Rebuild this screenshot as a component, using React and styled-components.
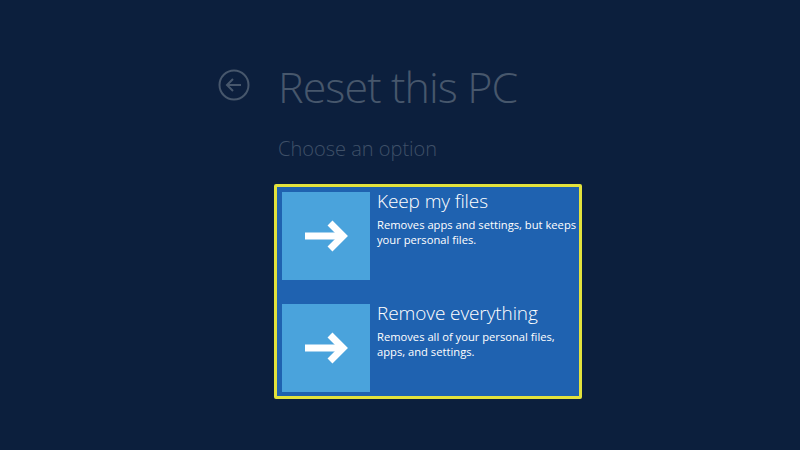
import React from "react";
import styled, { createGlobalStyle } from "styled-components";

const Global = createGlobalStyle`
  html, body { margin: 0; padding: 0; }
  body { background: #0c1f3d; font-family: "Open Sans", "Noto Sans", sans-serif; }
`;

const Page = styled.div`
  width: 800px;
  height: 450px;
  box-sizing: border-box;
  padding: 62px 0 0 218px;
  display: grid;
  grid-template-columns: 60px auto;
  grid-template-rows: auto auto auto;
  align-content: start;
  justify-content: start;
`;

const BackButton = styled.button`
  width: 32px;
  height: 32px;
  padding: 0;
  border: none;
  background: none;
  align-self: center;
  display: flex;
  margin-top: -4px;
`;

const Title = styled.h1`
  margin: 0;
  font-weight: 300;
  font-size: 43px;
  line-height: 50px;
  color: #47576c;
  letter-spacing: -0.9px;
`;

const Subtitle = styled.h2`
  grid-column: 2;
  margin: 24px 0 0 0;
  font-weight: 300;
  font-size: 20px;
  line-height: 26px;
  color: #3f5068;
`;

const OptionsBox = styled.div`
  grid-column: 2;
  margin: 22px 0 0 -4px;
  width: 308px;
  box-sizing: border-box;
  border: 3px solid #e3e23c;
  border-radius: 2px;
  background: #1f62b0;
  padding: 5px 0 4px 5px;
  display: flex;
  flex-direction: column;
  gap: 24px;
`;

const Option = styled.div`
  display: flex;
  gap: 7px;
  height: 88px;
`;

const Tile = styled.div`
  width: 88px;
  height: 88px;
  flex: none;
  background: #4aa3dc;
  display: flex;
  align-items: center;
  justify-content: center;
`;

const OptionText = styled.div`
  display: flex;
  flex-direction: column;
  color: #ffffff;
`;

const OptionTitle = styled.div`
  font-size: 19px;
  font-weight: 300;
  line-height: 22px;
  margin-top: -2px;
  letter-spacing: -0.1px;
`;

const OptionDesc = styled.div`
  font-size: 11.2px;
  line-height: 15px;
  margin-top: 5px;
  width: 205px;
`;

const BackIcon = () => (
  <svg width="32" height="32" viewBox="0 0 32 32">
    <circle cx="16" cy="16" r="14.5" fill="none" stroke="#47576c" strokeWidth="2" />
    <path d="M9 16 H23 M15 10 L9 16 L15 22" fill="none" stroke="#47576c" strokeWidth="2" />
  </svg>
);

const Arrow = () => (
  <svg width="44" height="32" viewBox="0 0 44 32">
    <path d="M1 16 H38" stroke="#fff" strokeWidth="7" fill="none" />
    <path d="M26 3 L39 16 L26 29" stroke="#fff" strokeWidth="7" fill="none" strokeLinejoin="miter" />
  </svg>
);

const options = [
  { title: "Keep my files", desc: "Removes apps and settings, but keeps your personal files." },
  { title: "Remove everything", desc: "Removes all of your personal files, apps, and settings." },
];

export default function App() {
  return (
    <>
      <Global />
      <Page>
        <BackButton aria-label="Back"><BackIcon /></BackButton>
        <Title>Reset this PC</Title>
        <Subtitle>Choose an option</Subtitle>
        <OptionsBox>
          {options.map((o) => (
            <Option key={o.title}>
              <Tile><Arrow /></Tile>
              <OptionText>
                <OptionTitle>{o.title}</OptionTitle>
                <OptionDesc>{o.desc}</OptionDesc>
              </OptionText>
            </Option>
          ))}
        </OptionsBox>
      </Page>
    </>
  );
}
